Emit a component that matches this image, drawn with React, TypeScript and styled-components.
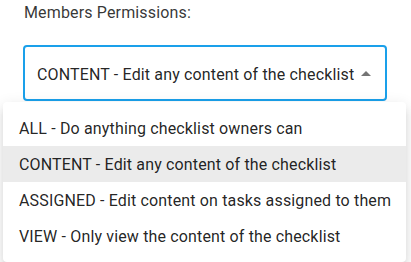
import React from "react";
import styled, { createGlobalStyle } from "styled-components";

const Global = createGlobalStyle`
  html, body { margin: 0; padding: 0; background: #fff; }
  body { font-family: Roboto, "Noto Sans", sans-serif; -webkit-font-smoothing: antialiased; }
`;

const Page = styled.div`
  width: 411px;
  height: 262px;
  overflow: hidden;
  padding: 3px 24px 0 23px;
  box-sizing: border-box;
`;

const Label = styled.div`
  font-size: 16px;
  letter-spacing: 0.15px;
  line-height: 20px;
  color: rgba(0, 0, 0, 0.8);
  padding-left: 1px;
  margin-bottom: 22px;
`;

const Field = styled.div`
  position: relative;
`;

const SelectBox = styled.div`
  box-sizing: border-box;
  width: 364px;
  height: 56px;
  border: 2px solid #1aa0ea;
  border-radius: 4px;
  display: flex;
  align-items: center;
  padding: 0 7px 0 12px;
  justify-content: space-between;
`;

const Value = styled.span`
  font-size: 16px;
  letter-spacing: 0.15px;
  color: rgba(0, 0, 0, 0.87);
  padding-top: 3px;
  white-space: nowrap;
`;

const Arrow = styled.svg`
  width: 24px;
  height: 24px;
  flex-shrink: 0;
  fill: rgba(0, 0, 0, 0.54);
  margin-top: 2px;
`;

const Menu = styled.ul`
  position: absolute;
  left: -20px;
  top: 57px;
  width: 403px;
  margin: 0;
  padding: 8px 0;
  list-style: none;
  background: #fff;
  border-radius: 4px;
  box-shadow: 0 5px 5px -3px rgba(0, 0, 0, 0.12), 0 8px 10px 1px rgba(0, 0, 0, 0.08),
    0 3px 14px 2px rgba(0, 0, 0, 0.07);
`;

const Item = styled.li<{ $selected?: boolean }>`
  height: 36px;
  display: flex;
  align-items: center;
  padding: 0 16px;
  font-size: 16px;
  letter-spacing: 0.15px;
  color: rgba(0, 0, 0, 0.87);
  background: ${(p) => (p.$selected ? "rgba(0,0,0,0.08)" : "transparent")};
  white-space: nowrap;
`;

const options = [
  "ALL - Do anything checklist owners can",
  "CONTENT - Edit any content of the checklist",
  "ASSIGNED - Edit content on tasks assigned to them",
  "VIEW - Only view the content of the checklist",
];

export default function App() {
  return (
    <>
      <Global />
      <Page>
        <Label>Members Permissions:</Label>
        <Field>
          <SelectBox>
            <Value>{options[1]}</Value>
            <Arrow viewBox="0 0 24 24">
              <path d="M7 14l5-5 5 5z" />
            </Arrow>
          </SelectBox>
          <Menu>
            {options.map((o, i) => (
              <Item key={o} $selected={i === 1}>
                {o}
              </Item>
            ))}
          </Menu>
        </Field>
      </Page>
    </>
  );
}
